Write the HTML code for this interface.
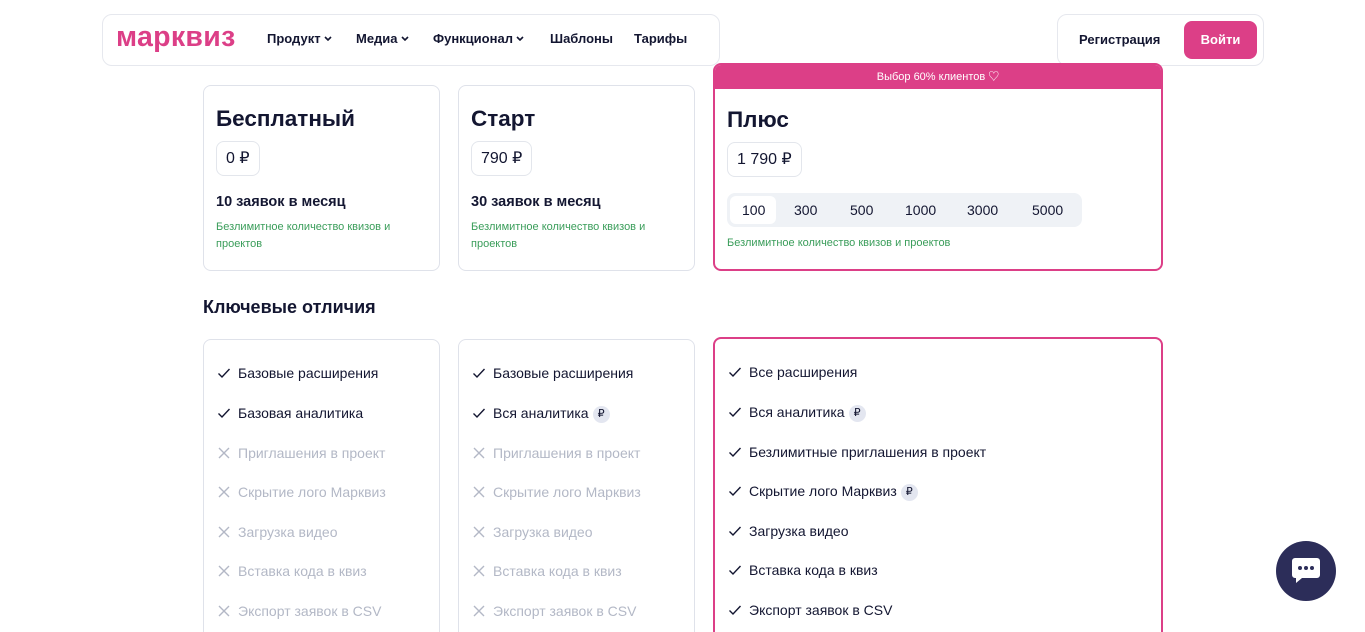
<!DOCTYPE html>
<html><head><meta charset="utf-8"><style>
*{box-sizing:border-box;margin:0;padding:0}
html,body{width:1365px;height:632px;overflow:hidden}
body{background:#fff;font-family:"Liberation Sans","Noto Sans CJK SC",sans-serif;color:#131631;position:relative}
.abs{position:absolute}
.box{position:absolute;border:1px solid #e6e8ee;border-radius:10px;background:#fff}
.nav a{position:absolute;top:31px;font-size:13px;font-weight:bold;color:#131631}
.card{position:absolute;border:1px solid #dfe2ea;border-radius:8px;background:#fff}
.pink{border:2px solid #dc3f87}
h2{position:absolute;font-size:22.5px;font-weight:bold}
.price{position:absolute;border:1px solid #e3e6ec;border-radius:8px;height:35px;padding:0 9px;line-height:33px;font-size:16px}
.green{position:absolute;font-size:11px;color:#3a9d5a;line-height:17px}
.sub{position:absolute;font-size:14.5px;font-weight:bold}
.row{position:absolute;font-size:14px;height:18px;line-height:18px;white-space:nowrap}
.row.off{color:#b3b8c6}
.ic{display:inline-block;width:14px;height:14px;margin-right:7px;vertical-align:-2px}
.rub{display:inline-block;width:17px;height:17px;border-radius:50%;background:#e3e6f0;font-size:11px;text-align:center;line-height:17px;margin-left:4px;vertical-align:middle}
.seg{position:absolute;font-size:14px;top:202px}
.chev{display:inline-block;width:8px;height:5px;margin-left:3px;vertical-align:2px}
</style></head><body>
<svg width="0" height="0" style="position:absolute"><defs>
<symbol id="ck" viewBox="0 0 14 14"><path d="M1.5 7.5l3.5 3.5 7.5-8" fill="none" stroke="#131631" stroke-width="1.4"/></symbol>
<symbol id="x" viewBox="0 0 14 14"><path d="M2 2l10 10M12 2L2 12" fill="none" stroke="#b3b8c6" stroke-width="1.4"/></symbol>
<symbol id="cv" viewBox="0 0 8 5"><path d="M1 1l3 3 3-3" fill="none" stroke="#131631" stroke-width="1.6"/></symbol>
</defs></svg>
<div class="abs" style="left:380px;top:-30px;font-size:26px;font-weight:bold;white-space:nowrap">Тарифы для индивидуальных и командных проектов</div>
<div class="box" style="left:102px;top:14px;width:618px;height:52px"></div>
<div class="abs" style="left:116px;top:21px;font-size:28.5px;font-weight:bold;color:#dc3f87;letter-spacing:0.3px">марквиз</div>
<div class="nav">
<a style="left:267px">Продукт<svg class="chev"><use href="#cv"/></svg></a><a style="left:356px">Медиа<svg class="chev"><use href="#cv"/></svg></a><a style="left:433px">Функционал<svg class="chev"><use href="#cv"/></svg></a><a style="left:550px">Шаблоны</a><a style="left:634px">Тарифы</a>
</div>
<div class="box" style="left:1057px;top:14px;width:207px;height:52px"></div>
<div class="abs" style="left:1079px;top:32px;font-size:13px;font-weight:bold">Регистрация</div>
<div class="abs" style="left:1184px;top:21px;width:73px;height:38px;border-radius:8px;background:#dc3f87;color:#fff;font-size:13px;font-weight:bold;text-align:center;line-height:38px">Войти</div>

<div class="card" style="left:203px;top:85px;width:237px;height:186px"></div>
<h2 style="left:216px;top:106px">Бесплатный</h2>
<div class="price" style="left:216px;top:141px">0 ₽</div>
<div class="sub" style="left:216px;top:194px">10 заявок в месяц</div>
<div class="green" style="left:216px;top:219px;width:210px">Безлимитное количество квизов и проектов</div>

<div class="card" style="left:458px;top:85px;width:237px;height:186px"></div>
<h2 style="left:471px;top:106px">Старт</h2>
<div class="price" style="left:471px;top:141px">790 ₽</div>
<div class="sub" style="left:471px;top:194px">30 заявок в месяц</div>
<div class="green" style="left:471px;top:219px;width:210px">Безлимитное количество квизов и проектов</div>

<div class="card pink" style="left:713px;top:63px;width:450px;height:208px;border-radius:8px;overflow:hidden">
<div style="height:24px;background:#dc3f87;color:#fff;font-size:11px;text-align:center;line-height:24px">Выбор 60% клиентов ♡</div></div>
<h2 style="left:727px;top:107px">Плюс</h2>
<div class="price" style="left:727px;top:142px">1 790 ₽</div>
<div class="abs" style="left:727px;top:193px;width:355px;height:34px;background:#eff2f6;border-radius:8px"></div>
<div class="abs" style="left:730px;top:196px;width:46px;height:28px;background:#fff;border-radius:6px"></div>
<div class="seg" style="left:742px">100</div><div class="seg" style="left:794px">300</div><div class="seg" style="left:850px">500</div><div class="seg" style="left:905px">1000</div><div class="seg" style="left:967px">3000</div><div class="seg" style="left:1032px">5000</div>
<div class="green" style="left:727px;top:235px">Безлимитное количество квизов и проектов</div>

<div class="abs" style="left:203px;top:297px;font-size:18px;font-weight:bold">Ключевые отличия</div>

<div class="card" style="left:203px;top:339px;width:237px;height:320px"></div>
<div class="card" style="left:458px;top:339px;width:237px;height:320px"></div>
<div class="card pink" style="left:713px;top:337px;width:450px;height:320px;border-radius:8px"></div>

<div class="row" style="left:217px;top:364px"><svg class="ic"><use href="#ck"/></svg>Базовые расширения</div>
<div class="row" style="left:217px;top:404px"><svg class="ic"><use href="#ck"/></svg>Базовая аналитика</div>
<div class="row off" style="left:217px;top:444px"><svg class="ic"><use href="#x"/></svg>Приглашения в проект</div>
<div class="row off" style="left:217px;top:483px"><svg class="ic"><use href="#x"/></svg>Скрытие лого Марквиз</div>
<div class="row off" style="left:217px;top:523px"><svg class="ic"><use href="#x"/></svg>Загрузка видео</div>
<div class="row off" style="left:217px;top:562px"><svg class="ic"><use href="#x"/></svg>Вставка кода в квиз</div>
<div class="row off" style="left:217px;top:602px"><svg class="ic"><use href="#x"/></svg>Экспорт заявок в CSV</div>

<div class="row" style="left:472px;top:364px"><svg class="ic"><use href="#ck"/></svg>Базовые расширения</div>
<div class="row" style="left:472px;top:404px"><svg class="ic"><use href="#ck"/></svg>Вся аналитика<span class="rub">₽</span></div>
<div class="row off" style="left:472px;top:444px"><svg class="ic"><use href="#x"/></svg>Приглашения в проект</div>
<div class="row off" style="left:472px;top:483px"><svg class="ic"><use href="#x"/></svg>Скрытие лого Марквиз</div>
<div class="row off" style="left:472px;top:523px"><svg class="ic"><use href="#x"/></svg>Загрузка видео</div>
<div class="row off" style="left:472px;top:562px"><svg class="ic"><use href="#x"/></svg>Вставка кода в квиз</div>
<div class="row off" style="left:472px;top:602px"><svg class="ic"><use href="#x"/></svg>Экспорт заявок в CSV</div>

<div class="row" style="left:728px;top:363px"><svg class="ic"><use href="#ck"/></svg>Все расширения</div>
<div class="row" style="left:728px;top:403px"><svg class="ic"><use href="#ck"/></svg>Вся аналитика<span class="rub">₽</span></div>
<div class="row" style="left:728px;top:443px"><svg class="ic"><use href="#ck"/></svg>Безлимитные приглашения в проект</div>
<div class="row" style="left:728px;top:482px"><svg class="ic"><use href="#ck"/></svg>Скрытие лого Марквиз<span class="rub">₽</span></div>
<div class="row" style="left:728px;top:522px"><svg class="ic"><use href="#ck"/></svg>Загрузка видео</div>
<div class="row" style="left:728px;top:561px"><svg class="ic"><use href="#ck"/></svg>Вставка кода в квиз</div>
<div class="row" style="left:728px;top:601px"><svg class="ic"><use href="#ck"/></svg>Экспорт заявок в CSV</div>

<div class="abs" style="left:1276px;top:541px;width:60px;height:60px;border-radius:50%;background:#2c2d59"></div>
<svg class="abs" style="left:1290px;top:556px" width="32" height="30" viewBox="0 0 32 30"><path d="M5 2h22a3 3 0 0 1 3 3v14a3 3 0 0 1-3 3H12l-6 5v-5H5a3 3 0 0 1-3-3V5a3 3 0 0 1 3-3z" fill="#fff"/><circle cx="10" cy="12" r="2" fill="#2c2d59"/><circle cx="16" cy="12" r="2" fill="#2c2d59"/><circle cx="22" cy="12" r="2" fill="#2c2d59"/></svg>
</body></html>
